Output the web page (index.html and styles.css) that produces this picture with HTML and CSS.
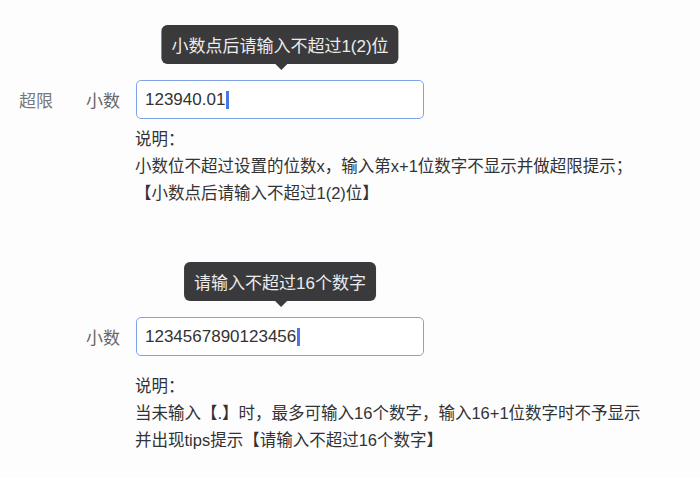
FILE: index.html
```html
<!DOCTYPE html>
<html lang="zh-CN">
<head>
    <meta charset="UTF-8">
    <meta name="viewport" content="width=device-width, initial-scale=1.0">
    <title>小数输入规则</title>
    <link rel="stylesheet" href="styles.css">
</head>
<body>
    <div class="page">
        <div class="rule rule-first">
            <div class="field">
                <span class="category">超限</span>
                <span class="label">小数</span>
                <div class="input-wrap">
                    <div class="tooltip">小数点后请输入不超过1(2)位</div>
                    <div class="input">123940.01<span class="caret"></span></div>
                </div>
            </div>
            <div class="desc desc-first">
                <p>说明：</p>
                <p>小数位不超过设置的位数x，输入第x+1位数字不显示并做超限提示；</p>
                <p>【小数点后请输入不超过1(2)位】</p>
            </div>
        </div>

        <div class="rule rule-second">
            <div class="field">
                <span class="category"></span>
                <span class="label">小数</span>
                <div class="input-wrap">
                    <div class="tooltip">请输入不超过16个数字</div>
                    <div class="input">1234567890123456<span class="caret"></span></div>
                </div>
            </div>
            <div class="desc desc-second">
                <p>说明：</p>
                <p>当未输入【.】时，最多可输入16个数字，输入16+1位数字时不予显示</p>
                <p>并出现tips提示【请输入不超过16个数字】</p>
            </div>
        </div>
    </div>
</body>
</html>
```

FILE: styles.css
```css
body {
    margin: 0;
    padding: 0;
    background-color: #fdfdfe;
    font-family: "Liberation Sans", "Noto Sans CJK SC", sans-serif;
    color: #333;
}
.page {
    padding: 80px 0 0 19px;
}
.rule-second {
    margin-top: 110px;
}
.field {
    display: grid;
    grid-template-columns: 67px 50px 288px;
    align-items: center;
    font-size: 17px;
}
.category {
    color: #777;
}
.label {
    color: #666;
}
.input-wrap {
    position: relative;
}
.input {
    height: 39px;
    box-sizing: border-box;
    border: 1px solid #7fa2e8;
    border-radius: 5px;
    background-color: #fff;
    padding: 0 8px;
    display: flex;
    align-items: center;
    color: #333;
    font-size: 17px;
}
.caret {
    display: inline-block;
    width: 3px;
    height: 18px;
    margin-left: 1px;
    background-color: #4a78e8;
}
.tooltip {
    position: absolute;
    bottom: 100%;
    left: 50%;
    transform: translateX(-50%);
    margin-bottom: 16px;
    height: 39px;
    padding: 0 10px;
    display: flex;
    align-items: center;
    white-space: nowrap;
    background-color: #3a3a3c;
    color: #ececec;
    font-size: 17px;
    border-radius: 6px;
}
.tooltip::after {
    content: "";
    position: absolute;
    top: 100%;
    left: 50%;
    margin-left: -5px;
    border: 6px solid transparent;
    border-top-color: #3a3a3c;
    border-bottom: 0;
}
.desc {
    margin-left: 116px;
    font-size: 16.5px;
    line-height: 27px;
}
.desc p {
    margin: 0;
}
.desc-first {
    margin-top: 7px;
}
.desc-second {
    margin-top: 17px;
}
```
